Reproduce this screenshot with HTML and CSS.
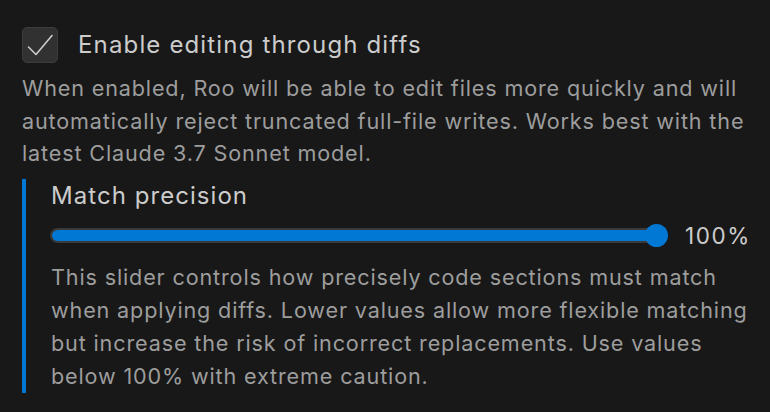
FILE: index.html
```html
<!DOCTYPE html>
<html>
<head>
<meta charset="utf-8">
<link rel="stylesheet" href="styles.css">
</head>
<body>
<div class="panel">
  <label class="row">
    <span class="checkbox">
      <svg width="36" height="36" viewBox="0 0 36 36"><path d="M6.5 20 L14 27.5 L30 8.5" fill="none" stroke="#cccccc" stroke-width="1.6" stroke-linecap="round" stroke-linejoin="round"/></svg>
    </span>
    <span class="title">Enable editing through diffs</span>
  </label>
  <p class="desc">When enabled, Roo will be able to edit files more quickly and will automatically reject truncated full-file writes. Works best with the latest Claude 3.7 Sonnet model.</p>
  <div class="section">
    <div class="label">Match precision</div>
    <div class="slider-row">
      <div class="slider">
        <div class="track"><div class="fill"></div></div>
        <div class="thumb"></div>
      </div>
      <span class="value">100%</span>
    </div>
    <p class="desc2">This slider controls how precisely code sections must match when applying diffs. Lower values allow more flexible matching but increase the risk of incorrect replacements. Use values below 100% with extreme caution.</p>
  </div>
</div>
</body>
</html>
```
FILE: styles.css
```css
html, body {
  margin: 0;
  padding: 0;
  background: #181818;
}
body {
  font-family: Inter, "Noto Sans", sans-serif;
  color: #cccccc;
  width: 770px;
  height: 412px;
  overflow: hidden;
}
.panel {
  padding: 27px 22px 0 22px;
}
.row {
  display: flex;
  align-items: center;
  gap: 20px;
  height: 36px;
}
.checkbox {
  width: 34px;
  height: 34px;
  box-sizing: content-box;
  border: 1px solid #3c3c3c;
  border-radius: 5px;
  background: #313131;
  position: relative;
  flex: none;
}
.checkbox svg {
  position: absolute;
  left: -1px;
  top: -1px;
}
.title {
  font-size: 24px;
  line-height: 30px;
  letter-spacing: 1.15px;
  color: #cccccc;
}
.desc {
  margin: 9px 0 0 0;
  font-size: 21.6px;
  line-height: 32.5px;
  letter-spacing: 0.85px;
  color: #9d9d9d;
}
.section {
  margin-top: 9px;
  border-left: 4px solid #0078d4;
  padding: 2px 0 0 25px;
}
.label {
  font-size: 24px;
  line-height: 30px;
  letter-spacing: 1.05px;
  color: #cccccc;
}
.slider-row {
  display: flex;
  align-items: center;
  margin-top: 13px;
  height: 24px;
  gap: 17px;
}
.slider {
  position: relative;
  flex: none;
  width: 618px;
  height: 24px;
  margin-left: -1px;
}
.track {
  position: absolute;
  left: 0;
  right: 6px;
  top: 4px;
  height: 15px;
  box-sizing: border-box;
  border: 2px solid #3a3a3a;
  border-radius: 8px;
  background: #3a3a3a;
  overflow: hidden;
}
.fill {
  width: 100%;
  height: 100%;
  background: #0078d4;
  border-radius: 6px;
}
.thumb {
  position: absolute;
  right: 0;
  top: 0;
  width: 23px;
  height: 23px;
  border-radius: 50%;
  background: #0078d4;
}
.value {
  flex: none;
  font-size: 22.5px;
  letter-spacing: 1.6px;
  color: #cccccc;
}
.desc2 {
  margin: 13px 0 0 0;
  font-size: 21.6px;
  line-height: 33px;
  letter-spacing: 0.85px;
  color: #9d9d9d;
}
```
